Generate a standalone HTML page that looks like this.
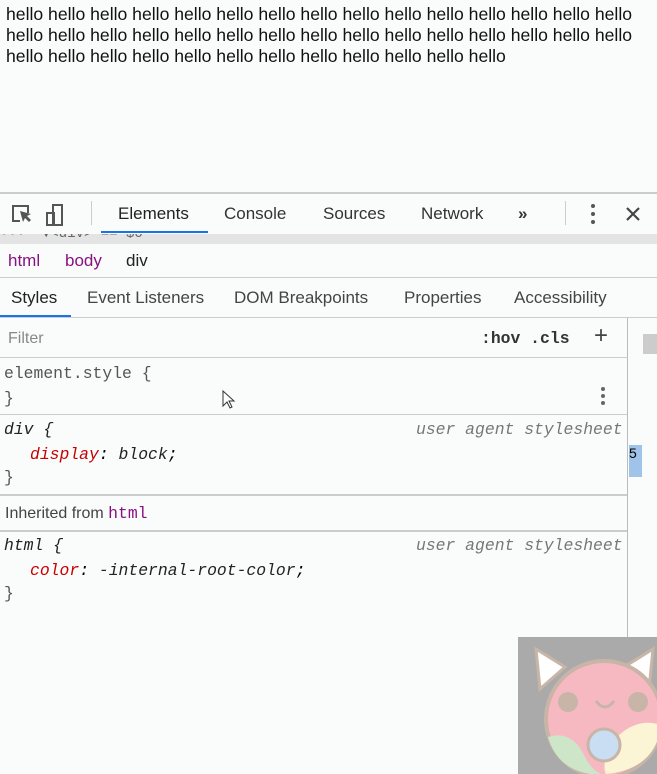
<!DOCTYPE html>
<html><head><style>
body{margin:0;width:657px;height:774px;overflow:hidden;background:#fafbfb;font-family:"Liberation Sans",Arial,sans-serif;position:relative}
.a{position:absolute}
.top{left:6px;top:4px;width:645px;font-size:17.6px;line-height:21px;color:#111;white-space:nowrap}
.mono{font-family:"Liberation Mono","DejaVu Sans Mono",monospace;font-size:16.4px}
.tab{font-size:17px;color:#333;top:204px}
.sub{font-size:17px;color:#444;top:288px}
.line{left:0;width:627px;height:1px;background:#ccc}
</style></head><body>
<div class="a top">hello hello hello hello hello hello hello hello hello hello hello hello hello hello hello<br>hello hello hello hello hello hello hello hello hello hello hello hello hello hello hello<br>hello hello hello hello hello hello hello hello hello hello hello hello</div>
<div class="a" style="left:0;top:192px;width:657px;height:2px;background:#ccc"></div>
<svg class="a" style="left:10px;top:202px" width="60" height="26"><path d="M10 19H3V4h15v7" fill="none" stroke="#555" stroke-width="2"/><path d="M10 9l3 11 2-4 4 4 2-2-4-4 4-2z" fill="#555"/><rect x="43" y="3" width="9" height="20" fill="none" stroke="#555" stroke-width="2"/><rect x="37" y="11" width="7" height="12" fill="none" stroke="#555" stroke-width="2"/></svg>
<div class="a" style="left:91px;top:201px;width:1px;height:24px;background:#ccc"></div>
<div class="a tab" style="left:118px;color:#222">Elements</div>
<div class="a" style="left:101px;top:231px;width:107px;height:2px;background:#1a73e8"></div>
<div class="a tab" style="left:224px">Console</div>
<div class="a tab" style="left:323px">Sources</div>
<div class="a tab" style="left:421px">Network</div>
<div class="a tab" style="left:518px;font-weight:bold">»</div>
<div class="a" style="left:565px;top:201px;width:1px;height:24px;background:#ccc"></div>
<svg class="a" style="left:585px;top:202px" width="60" height="24"><circle cx="8" cy="4" r="2" fill="#555"/><circle cx="8" cy="12" r="2" fill="#555"/><circle cx="8" cy="20" r="2" fill="#555"/><path d="M42 6l12 12M54 6L42 18" stroke="#444" stroke-width="2.2"/></svg>
<div class="a" style="left:0;top:234px;width:657px;height:10px;background:#e4e4e4;overflow:hidden"><span class="mono" style="position:absolute;left:0;top:-8px;color:#666;font-size:14px">•••&nbsp;&nbsp;▼&lt;div&gt; == $0</span></div>
<div class="a" style="left:8px;top:251px;font-size:17px;color:#881280">html</div>
<div class="a" style="left:65px;top:251px;font-size:17px;color:#881280">body</div>
<div class="a" style="left:126px;top:251px;font-size:17px;color:#222">div</div>
<div class="a" style="left:0;top:277px;width:657px;height:1px;background:#ccc"></div>
<div class="a sub" style="left:11px;color:#222">Styles</div>
<div class="a" style="left:0;top:315px;width:71px;height:2px;background:#1a73e8"></div>
<div class="a sub" style="left:87px">Event Listeners</div>
<div class="a sub" style="left:234px">DOM Breakpoints</div>
<div class="a sub" style="left:404px">Properties</div>
<div class="a sub" style="left:514px">Accessibility</div>
<div class="a" style="left:0;top:317px;width:657px;height:1px;background:#ccc"></div>
<div class="a" style="left:627px;top:318px;width:1px;height:456px;background:#bbb"></div>
<div class="a" style="left:8px;top:330px;font-size:16px;color:#888">Filter</div>
<div class="a mono" style="left:481px;top:329px;font-weight:bold;color:#333">:hov&nbsp;.cls</div>
<div class="a" style="left:594px;top:322px;font-size:24px;color:#444">+</div>
<div class="a line" style="top:357px"></div>
<div class="a mono" style="left:4px;top:364px;color:#555">element.style {</div>
<div class="a mono" style="left:4px;top:389px;color:#555">}</div>
<svg class="a" style="left:598px;top:385px" width="10" height="22"><circle cx="5" cy="4" r="2" fill="#666"/><circle cx="5" cy="11" r="2" fill="#666"/><circle cx="5" cy="18" r="2" fill="#666"/></svg>
<svg class="a" style="left:222px;top:390px" width="14" height="20"><path d="M1 1v15l4-4 3 6 2-1-3-6h5z" fill="#fff" stroke="#333"/></svg>
<div class="a line" style="top:414px"></div>
<div class="a mono" style="left:4px;top:420px;font-style:italic;color:#222">div {</div>
<div class="a mono" style="left:416px;top:420px;font-style:italic;color:#777">user agent stylesheet</div>
<div class="a mono" style="left:30px;top:445px;font-style:italic"><span style="color:#c80000">display</span>: <span style="color:#222">block</span>;</div>
<div class="a mono" style="left:4px;top:468px;color:#555">}</div>
<div class="a line" style="top:494px;height:2px"></div>
<div class="a" style="left:5px;top:504px;font-size:16px;color:#444">Inherited from <span class="mono" style="color:#881280">html</span></div>
<div class="a line" style="top:530px;height:2px"></div>
<div class="a mono" style="left:4px;top:536px;font-style:italic;color:#222">html {</div>
<div class="a mono" style="left:416px;top:536px;font-style:italic;color:#777">user agent stylesheet</div>
<div class="a mono" style="left:30px;top:561px;font-style:italic"><span style="color:#c80000">color</span>: <span style="color:#222">-internal-root-color</span>;</div>
<div class="a mono" style="left:4px;top:584px;color:#555">}</div>
<div class="a" style="left:643px;top:334px;width:14px;height:20px;background:#ccc"></div>
<div class="a" style="left:629px;top:445px;width:13px;height:32px;background:#9fc3e9;font-size:14px">5</div>
<div class="a" style="left:518px;top:637px;width:139px;height:137px;background:#aaa"></div>
<svg class="a" style="left:518px;top:637px" width="139" height="137">
<path d="M18 12l4 40 25-22zM135 12l-4 40-25-22z" fill="#fff" stroke="#c8b5a8" stroke-width="3"/>
<circle cx="86" cy="82" r="58" fill="#f6b9c1" stroke="#c8b5a8" stroke-width="4"/>
<path d="M30 100q25-8 38 22 8 14 18 16-45 0-56-38z" fill="#cde6c8"/>
<path d="M143 88q-30-10-55 25-3 20 0 24 50-5 55-49z" fill="#fbf5d6"/>
<circle cx="86" cy="108" r="16" fill="#c9def2" stroke="#c8b5a8" stroke-width="3"/>
<circle cx="50" cy="65" r="10" fill="#c8b5a8"/><circle cx="120" cy="65" r="10" fill="#c8b5a8"/>
<path d="M78 64q9 12 18 0" fill="none" stroke="#c8b5a8" stroke-width="3"/>
</svg>
</body></html>
